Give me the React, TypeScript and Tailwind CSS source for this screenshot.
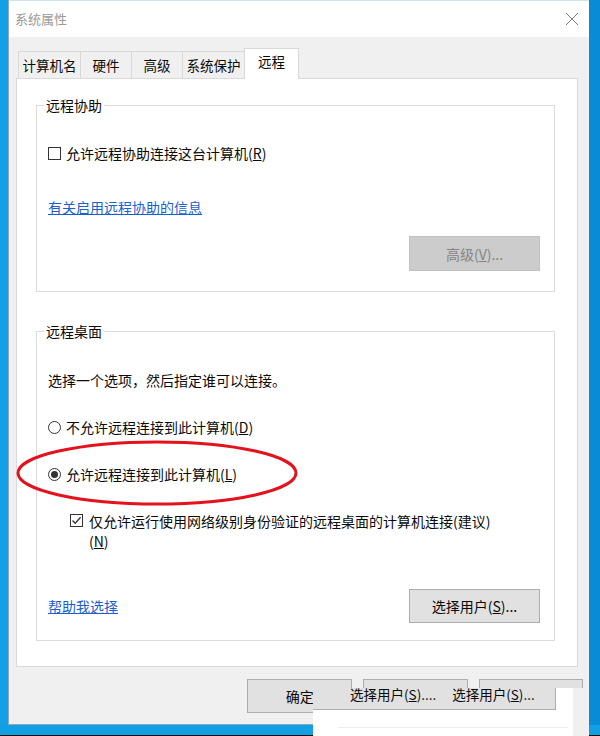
import React from "react";

function Radio({ checked }: { checked?: boolean }) {
  return (
    <span className="w-[13px] h-[13px] rounded-full border border-[#333333] bg-white flex items-center justify-center shrink-0">
      {checked && <span className="w-[7px] h-[7px] rounded-full bg-[#333333]" />}
    </span>
  );
}

function Check({ checked }: { checked?: boolean }) {
  return (
    <span className="w-[13px] h-[13px] border border-[#333333] bg-white flex items-center justify-center shrink-0">
      {checked && (
        <svg width="11" height="11" viewBox="0 0 11 11">
          <path d="M1.5 5.5 L4.2 8.3 L9.6 2.2" fill="none" stroke="#333333" strokeWidth="1.3" />
        </svg>
      )}
    </span>
  );
}

export default function App() {
  const tabs = [
    { t: "计算机名", w: "w-[63px]" },
    { t: "硬件", w: "w-[52px]" },
    { t: "高级", w: "w-[52px]" },
    { t: "系统保护", w: "w-[63px]" },
  ];
  return (
    <div className="relative w-[600px] h-[736px] overflow-hidden bg-[#0d97dd] font-['Noto_Sans_CJK_SC','Microsoft_YaHei',sans-serif] text-[14px] leading-[20px] text-[#0a0a0a]">
      <div className="flex flex-col h-[736px]">
        <div className="flex h-[725px]">
          <div className="w-[8px] bg-[#14a0e6]" />
          <div className="w-[581px] h-[725px] flex flex-col bg-[#f0f0f0] border-b border-l border-[#8fa7b8]">
            {/* title bar */}
            <div className="h-[37px] bg-white border-t border-[#cfe3f0] flex items-center justify-between pl-[6px] pr-[10px]">
              <span className="text-[13px] text-[#9a9a9a]">系统属性</span>
              <svg width="14" height="14" viewBox="0 0 14 14">
                <path d="M1 1 L13 13 M13 1 L1 13" stroke="#7a7a7a" strokeWidth="1" />
              </svg>
            </div>
            {/* body */}
            <div className="flex-1 flex flex-col pl-[7px] pr-[11px] pt-[11px]">
              {/* tabs */}
              <div className="flex items-end h-[30px] ml-[2px]">
                {tabs.map((tb, i) => (
                  <div
                    key={tb.t}
                    className={`${tb.w} h-[27px] ${i === 0 ? "" : "-ml-px"} border border-b-0 border-[#d9d9d9] bg-[#f0f0f0] flex items-center justify-center text-[13.5px]`}
                  >
                    {tb.t}
                  </div>
                ))}
                <div className="w-[55px] h-[31px] -ml-px -mb-px relative z-10 border border-b-0 border-[#d9d9d9] bg-white flex items-start justify-center pt-[2px] text-[13.5px]">
                  远程
                </div>
              </div>
              {/* panel */}
              <div className="h-[589px] border border-[#d9d9d9] bg-white pl-[19px] pr-[22px] pt-[16px] flex flex-col">
                <fieldset className="border border-[#dcdcdc] pl-[11px] pr-[14px] pb-[20px] flex flex-col">
                  <legend className="-ml-[4px] px-[2px]">远程协助</legend>
                  <div className="mt-[28px] flex items-center gap-[5px]">
                    <Check />
                    <span>
                      允许远程协助连接这台计算机(<u>R</u>)
                    </span>
                  </div>
                  <div className="mt-[34px]">
                    <span className="text-[#1a5fcf] underline">有关启用远程协助的信息</span>
                  </div>
                  <div className="mt-[19px] flex justify-end">
                    <div className="w-[131px] h-[35px] bg-[#cccccc] border border-[#c2c2c2] flex items-center justify-center text-[#858585]">
                      高级(<u>V</u>)...
                    </div>
                  </div>
                </fieldset>

                <fieldset className="mt-[29px] border border-[#dcdcdc] pl-[11px] pr-[14px] pb-[17px] flex flex-col">
                  <legend className="-ml-[4px] px-[2px]">远程桌面</legend>
                  <div className="mt-[29px]">选择一个选项，然后指定谁可以连接。</div>
                  <div className="mt-[27px] flex items-center gap-[5px]">
                    <Radio />
                    <span>
                      不允许远程连接到此计算机(<u>D</u>)
                    </span>
                  </div>
                  <div className="mt-[27px] flex items-center gap-[5px]">
                    <Radio checked />
                    <span>
                      允许远程连接到此计算机(<u>L</u>)
                    </span>
                  </div>
                  <div className="mt-[27px] ml-[22px] flex items-start gap-[6px]">
                    <span className="mt-[3px]">
                      <Check checked />
                    </span>
                    <span>
                      仅允许运行使用网络级别身份验证的远程桌面的计算机连接(建议)
                      <br />(<u>N</u>)
                    </span>
                  </div>
                  <div className="mt-[38px] flex items-center justify-between">
                    <span className="text-[#1a5fcf] underline">帮助我选择</span>
                    <div className="w-[131px] h-[34px] bg-[#e1e1e1] border border-[#adadad] flex items-center justify-center">
                      选择用户(<u>S</u>)...
                    </div>
                  </div>
                </fieldset>
              </div>
              {/* bottom buttons */}
              <div className="mt-[12px] ml-[231px] flex gap-[11px] -mr-[5px]">
                <div className="w-[106px] h-[34px] bg-[#e1e1e1] border border-[#adadad] flex items-center justify-center">
                  确定
                </div>
                <div className="w-[105px] h-[34px] bg-[#e1e1e1] border border-[#adadad]" />
                <div className="w-[105px] h-[34px] bg-[#e1e1e1] border border-[#adadad]" />
              </div>
            </div>
          </div>
          <div className="w-[11px] bg-[#0a8bd6]" />
        </div>
        <div className="h-[10px] bg-[#12a0e4]" />
        <div className="h-px bg-black" />
      </div>

      {/* red annotation ellipse */}
      <svg className="absolute left-[15px] top-[439px] pointer-events-none" width="284" height="68" viewBox="0 0 284 68">
        <ellipse cx="142" cy="34" rx="139" ry="31" fill="none" stroke="#e3121c" strokeWidth="3" />
      </svg>

      {/* pasted fragment overlay */}
      <div className="absolute left-[313px] top-[688px] w-[276px] h-[48px] bg-white">
        <div className="w-[243px] h-[22px] bg-[#e1e1e1] border-r border-b border-[#adadad] flex items-start text-[13.5px] leading-[18px]">
          <span className="ml-[37px] -mt-[3px] whitespace-nowrap">
            选择用户(<u>S</u>)....
          </span>
          <span className="ml-[16px] -mt-[3px] whitespace-nowrap">
            选择用户(<u>S</u>)...
          </span>
        </div>
        <div className="absolute left-[25px] top-[39px] w-[230px] h-px bg-[#ececec]" />
        <div className="absolute right-0 top-0 w-[16px] h-[48px] bg-[#f0f0f0]" />
      </div>
    </div>
  );
}
